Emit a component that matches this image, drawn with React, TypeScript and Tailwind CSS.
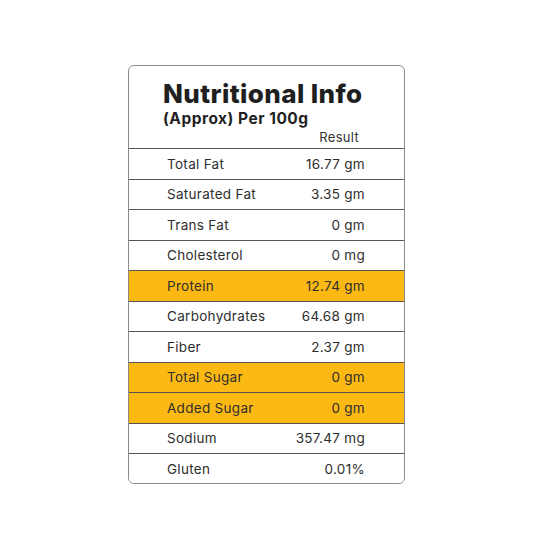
import React from 'react';

const rows = [
  { name: 'Total Fat', value: '16.77 gm' },
  { name: 'Saturated Fat', value: '3.35 gm' },
  { name: 'Trans Fat', value: '0 gm' },
  { name: 'Cholesterol', value: '0 mg' },
  { name: 'Protein', value: '12.74 gm', highlight: true },
  { name: 'Carbohydrates', value: '64.68 gm' },
  { name: 'Fiber', value: '2.37 gm' },
  { name: 'Total Sugar', value: '0 gm', highlight: true },
  { name: 'Added Sugar', value: '0 gm', highlight: true },
  { name: 'Sodium', value: '357.47 mg' },
  { name: 'Gluten', value: '0.01%' },
];

const App = () => {
  return (
    <div className="w-[533px] h-[533px] bg-white flex justify-center pt-[65px] font-['Inter',sans-serif]">
      <div className="w-[277px] h-[419px] border border-[#8a8a8a] rounded-[6px] overflow-hidden">
        <div className="h-[82px] pl-[34px] pr-[45px] pt-[13px] text-[#1f1f1f]">
          <h1 className="text-[26px] leading-[30px] font-extrabold tracking-[0.4px] whitespace-nowrap">Nutritional Info</h1>
          <p className="text-[15.5px] leading-[20px] font-bold tracking-[0.5px] whitespace-nowrap">(Approx) Per 100g</p>
          <p className="text-[13px] leading-[16px] text-right text-[#333] tracking-[0.3px]">Result</p>
        </div>
        {rows.map((row) => (
          <div
            key={row.name}
            className={`h-[30.5px] border-t border-[#555] flex items-center justify-between pl-[38px] pr-[39px] text-[13.5px] tracking-[0.3px] text-[#2e2e2e] ${
              row.highlight ? 'bg-[#fdb913]' : 'bg-white'
            }`}
          >
            <span>{row.name}</span>
            <span>{row.value}</span>
          </div>
        ))}
      </div>
    </div>
  );
};

export default App;
